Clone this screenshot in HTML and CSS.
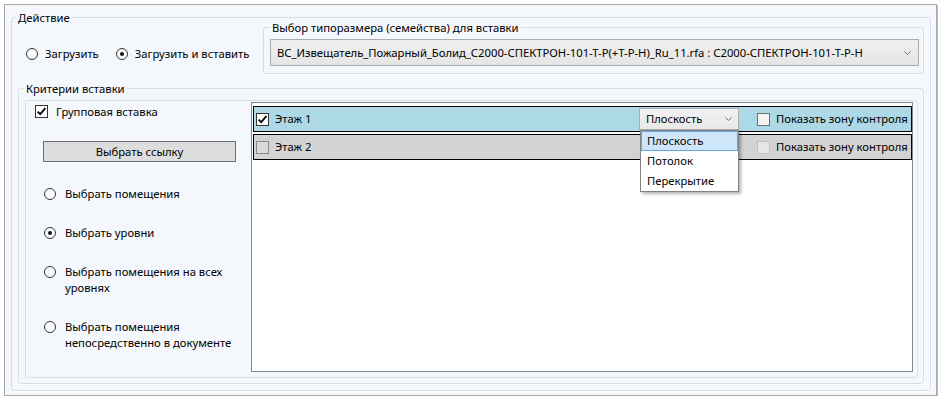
FILE: index.html
```html
<!DOCTYPE html>
<html lang="ru">
<head>
<meta charset="utf-8">
<title>Вставка семейства</title>
<link rel="stylesheet" href="styles.css">
</head>
<body>
<div class="window">
  <fieldset class="grp grp-action">
    <legend class="lg lg-action">Действие</legend>
    <div class="action-top">
      <div class="load-radios">
        <label class="radio"><span class="rb"></span>Загрузить</label>
        <label class="radio"><span class="rb on"></span>Загрузить и вставить</label>
      </div>
      <fieldset class="grp grp-type">
        <legend class="lg lg-type">Выбор типоразмера (семейства) для вставки</legend>
        <div class="type-body">
          <div class="combo combo-wide">
            <span class="combo-text">ВС_Извещатель_Пожарный_Болид_С2000-СПЕКТРОН-101-Т-Р(+Т-Р-Н)_Ru_11.rfa : С2000-СПЕКТРОН-101-Т-Р-Н</span>
            <svg class="chev" width="7" height="4" viewBox="0 0 7 4"><polyline points="0.5,0.5 3.5,3.5 6.5,0.5" fill="none" stroke="#707070" stroke-width="1"/></svg>
          </div>
        </div>
      </fieldset>
    </div>
    <fieldset class="grp grp-criteria">
      <legend class="lg lg-criteria">Критерии вставки</legend>
      <div class="panel">
        <div class="left-col">
          <label class="check-row">
            <span class="cb"><svg width="11" height="11" viewBox="0 0 11 11"><polyline points="1.6,5.6 4.2,8.2 9.4,2.2" fill="none" stroke="#000" stroke-width="1.8"/></svg></span>
            Групповая вставка
          </label>
          <button class="btn" type="button">Выбрать ссылку</button>
          <div class="radio-list">
            <label class="radio radio-item"><span class="rb"></span><span>Выбрать помещения</span></label>
            <label class="radio radio-item"><span class="rb on"></span><span>Выбрать уровни</span></label>
            <label class="radio radio-item"><span class="rb"></span><span>Выбрать помещения на всех<br>уровнях</span></label>
            <label class="radio radio-item"><span class="rb"></span><span>Выбрать помещения<br>непосредственно в документе</span></label>
          </div>
        </div>
        <div class="listbox">
          <div class="lrow lrow-selected">
            <label class="lrow-name">
              <span class="cb"><svg width="11" height="11" viewBox="0 0 11 11"><polyline points="1.6,5.6 4.2,8.2 9.4,2.2" fill="none" stroke="#000" stroke-width="1.8"/></svg></span>
              Этаж 1
            </label>
            <div class="combo-wrap">
              <div class="combo combo-small">
                <span class="combo-text">Плоскость</span>
                <svg class="chev" width="7" height="4" viewBox="0 0 7 4"><polyline points="0.5,0.5 3.5,3.5 6.5,0.5" fill="none" stroke="#707070" stroke-width="1"/></svg>
              </div>
              <ul class="dropdown">
                <li class="dd-item dd-hot">Плоскость</li>
                <li class="dd-item">Потолок</li>
                <li class="dd-item">Перекрытие</li>
              </ul>
            </div>
            <label class="zone"><span class="cb cb-zone"></span>Показать зону контроля</label>
          </div>
          <div class="lrow lrow-plain">
            <label class="lrow-name"><span class="cb cb-dim"></span>Этаж 2</label>
            <div class="combo-wrap"></div>
            <label class="zone"><span class="cb cb-off"></span>Показать зону контроля</label>
          </div>
        </div>
      </div>
    </fieldset>
  </fieldset>
</div>
</body>
</html>
```
FILE: styles.css
```css
html, body {
  margin: 0;
  padding: 0;
  background: #ffffff;
}

body {
  font-family: "Noto Sans", "Open Sans", sans-serif;
  font-size: 11.25px;
  line-height: 16px;
  color: #000;
}

.window {
  box-sizing: content-box;
  margin: 4px 0 0 4px;
  width: 931px;
  height: 390px;
  border: 1px solid #a9a9a9;
  box-shadow: 1px 1px 0 #bcbcbc;
  background: #f4f7fb;
  display: flex;
  flex-direction: column;
}

.grp {
  margin: 0;
  padding: 0;
  min-width: 0;
  border: 1px solid #d5dfe5;
  border-radius: 3px;
  box-shadow: 1px 1px 0 #ffffff;
}

.lg {
  padding: 0 2px;
  height: 15px;
  line-height: 15px;
  color: #000;
}

.grp-action {
  margin: 5px 5px 4px 6px;
  flex: 1;
  display: flex;
  flex-direction: column;
}

.lg-action { margin-left: 4px; }

.action-top {
  display: flex;
  align-items: flex-start;
  margin-top: -5px;
}

.load-radios {
  width: 251px;
  box-sizing: border-box;
  padding: 26px 0 0 14px;
  display: flex;
  gap: 17px;
}

.radio {
  display: flex;
  align-items: center;
  line-height: 15px;
}

.rb {
  width: 10px;
  height: 10px;
  border: 1px solid #333;
  border-radius: 50%;
  background: #fff;
  margin-right: 7px;
  display: flex;
  align-items: center;
  justify-content: center;
  flex: none;
}

.rb.on::after {
  content: "";
  width: 4px;
  height: 4px;
  border-radius: 50%;
  background: #111;
}

.grp-type {
  flex: 1;
  margin: 0 6px 0 0;
}

.lg-type { margin-left: 6px; }

.type-body {
  padding: 4px 4px 7px 6px;
}

.combo {
  box-sizing: border-box;
  border: 1px solid #acacac;
  background: linear-gradient(#f0f0f0, #e5e5e5);
  display: flex;
  align-items: center;
  justify-content: space-between;
  white-space: nowrap;
  overflow: hidden;
}

.combo-wide {
  height: 27px;
  padding: 0 7px 0 6px;
}

.combo-text {
  overflow: hidden;
}

.chev { flex: none; }

.grp-criteria {
  margin: 7px 6px 6px 6px;
  flex: 1;
  display: flex;
  flex-direction: column;
}

.lg-criteria { margin-left: 5px; }

.panel {
  margin: 4px 5px 5px 6px;
  flex: 1;
  border: 1px solid #d5dfe5;
  border-radius: 3px;
  display: flex;
}

.left-col {
  width: 225px;
  flex: none;
  padding: 3px 0 0 9px;
  box-sizing: border-box;
  display: flex;
  flex-direction: column;
  align-items: flex-start;
}

.check-row {
  display: flex;
  align-items: center;
  height: 15px;
}

.cb {
  box-sizing: border-box;
  width: 13px;
  height: 13px;
  border: 1px solid #333;
  background: #fff;
  display: flex;
  align-items: center;
  justify-content: center;
  flex: none;
}

.check-row .cb { margin-right: 8px; }

.btn {
  margin: 22px 0 0 8px;
  width: 193px;
  height: 21px;
  box-sizing: border-box;
  border: 1px solid #707070;
  background: #dddddd;
  font-family: inherit;
  font-size: 11.25px;
  color: #000;
  padding: 0;
  line-height: 19px;
}

.radio-list {
  margin-top: 24px;
  padding-left: 9px;
  display: flex;
  flex-direction: column;
  gap: 23px;
}

.radio-item {
  align-items: flex-start;
  line-height: 16px;
}

.radio-item .rb {
  margin-top: 2px;
  margin-right: 9px;
}

.listbox {
  flex: 1;
  margin: 1px 4px 5px 0;
  border: 1px solid #828790;
  background: #fff;
  padding: 3px 0 0 1px;
  display: flex;
  flex-direction: column;
  gap: 2px;
}

.lrow {
  box-sizing: border-box;
  height: 26px;
  border: 1px solid #000;
  display: grid;
  grid-template-columns: 383px 100px 1fr;
  align-items: center;
  padding-left: 2px;
}

.lrow-selected { background: #add8e6; }
.lrow-plain { background: #d3d3d3; }

.lrow-name {
  display: flex;
  align-items: center;
}

.lrow-name .cb { margin-right: 6px; }

.cb-zone {
  border-color: #707070;
  background: #f3f3f3;
}

.cb-dim {
  border-color: #8a8a8a;
  background: #dadada;
}

.cb-off {
  border-color: #c4c4c4;
  background: #e6e6e6;
}

.combo-wrap {
  position: relative;
  height: 22px;
}

.combo-small {
  height: 22px;
  padding: 0 6px 0 6px;
  background: linear-gradient(#f2f2f2, #e8e8e8);
}

.dropdown {
  position: absolute;
  top: 100%;
  left: 1px;
  width: 99px;
  box-sizing: border-box;
  margin: 0;
  padding: 0;
  list-style: none;
  background: #fff;
  border: 1px solid #828282;
  box-shadow: 2px 2px 3px rgba(0, 0, 0, 0.3);
  z-index: 2;
}

.dd-item {
  height: 20px;
  box-sizing: border-box;
  line-height: 18px;
  padding-left: 5px;
  border: 1px solid transparent;
}

.dd-hot {
  background: #cfe6fa;
  border-color: #64a6e0;
}

.zone {
  display: flex;
  align-items: center;
  padding-left: 18px;
  white-space: nowrap;
}

.zone .cb { margin-right: 6px; }
```
